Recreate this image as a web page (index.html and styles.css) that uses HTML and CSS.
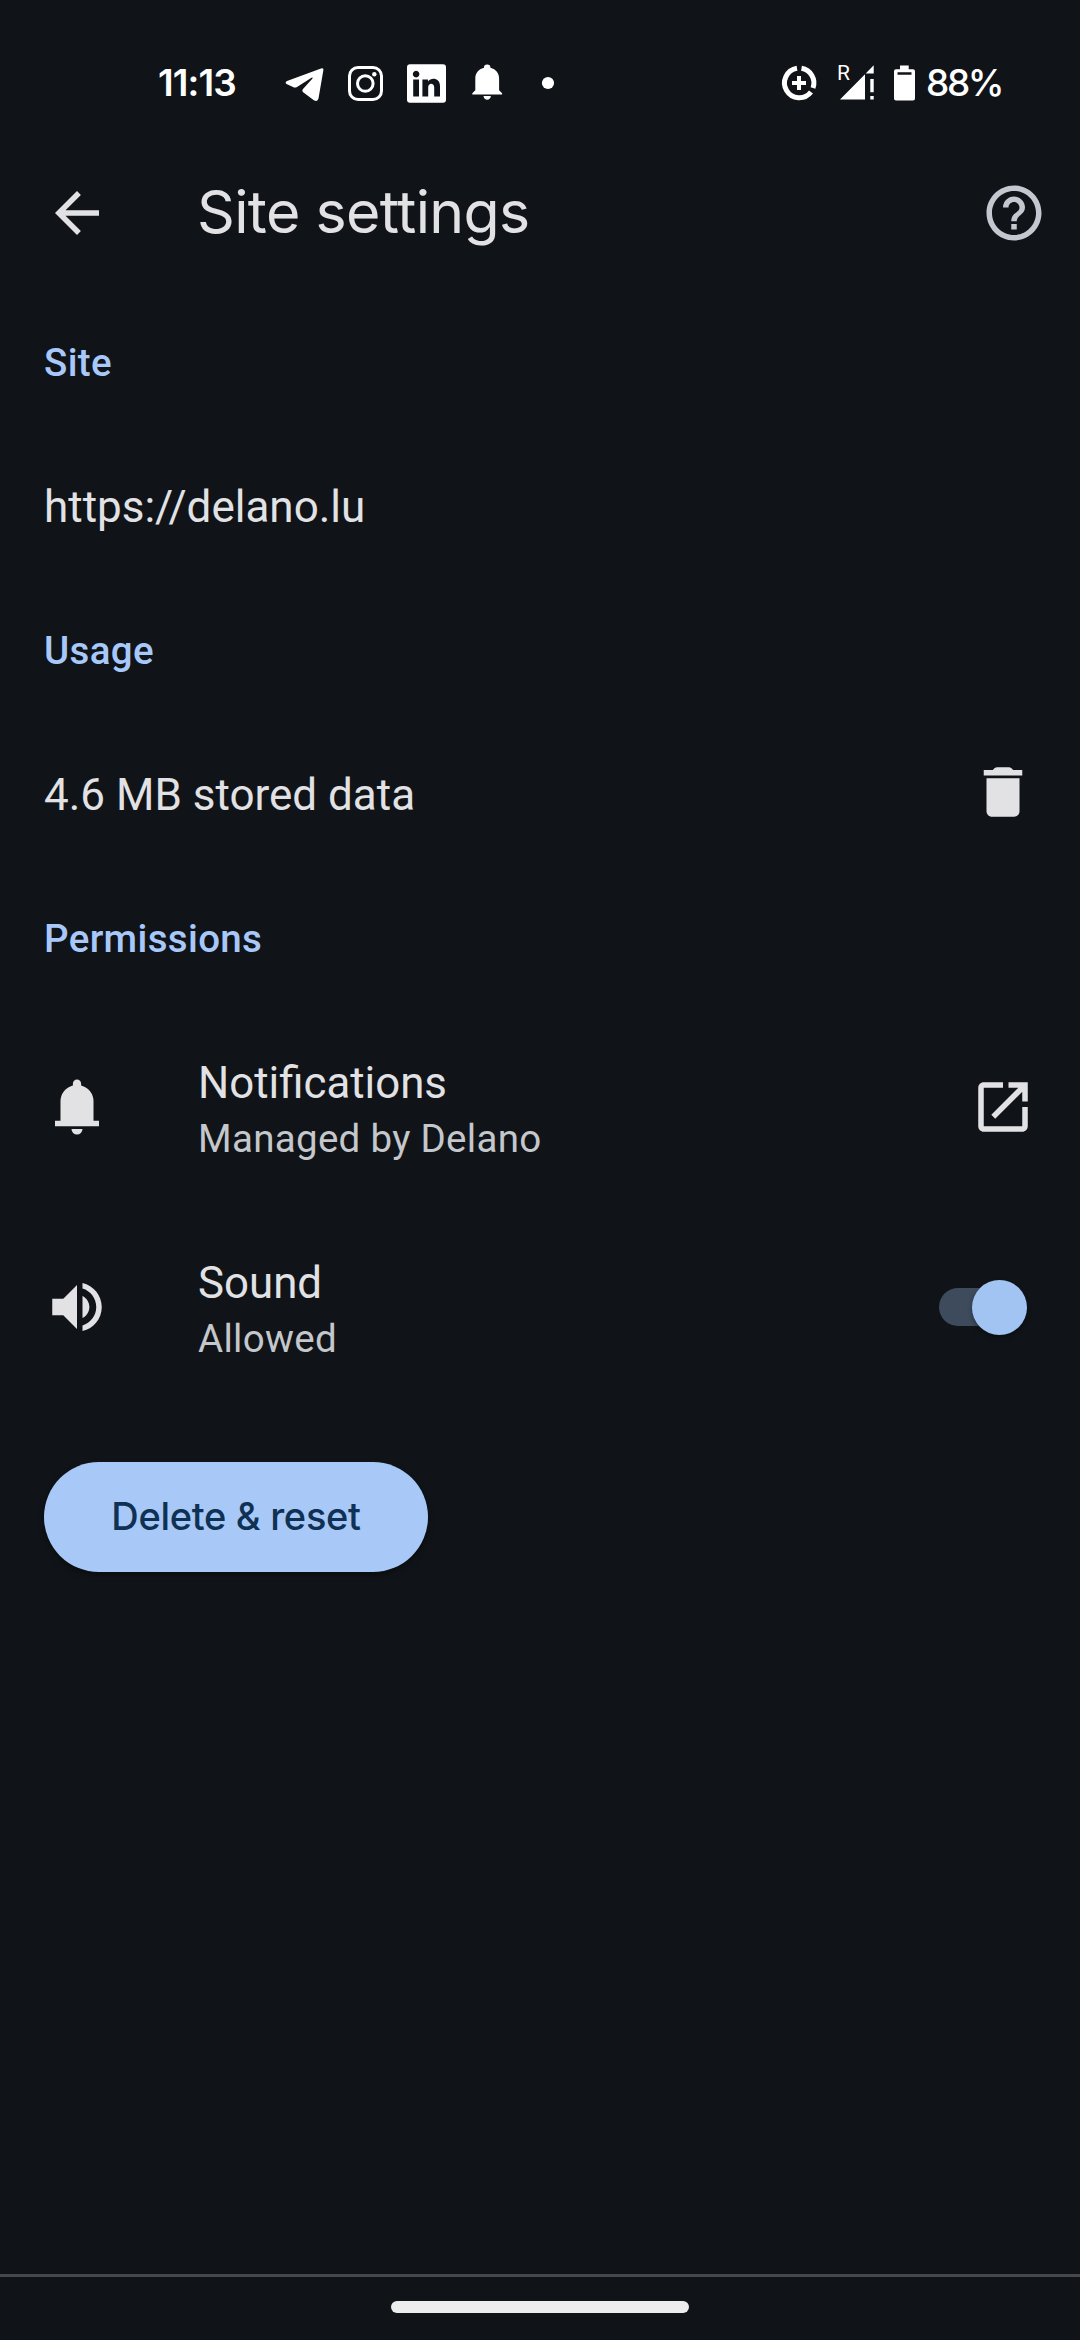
FILE: index.html
```html
<!DOCTYPE html>
<html lang="en">
<head>
<meta charset="utf-8">
<title>Site settings</title>
<link rel="stylesheet" href="styles.css">
</head>
<body>
<div class="screen">
  <div class="status">
    <span class="clock">11:13</span>
    <svg class="notices" width="280" height="50" viewBox="280 58 280 50">
      <path d="M286.500 84 Q284.500 82.500 287 81 L321 68.400 Q323.800 67.600 323.400 70 L318.500 98.500 Q317.500 102.500 313.500 100 L303.500 92.500 Q301.500 91 303 89 L312.500 78.500 Q313 77 311.500 77.800 L297 87 Q295 88 293 87 Z"/>
      <rect x="349.500" y="67.500" width="32" height="32" rx="8.500" class="line"/>
      <circle cx="365.300" cy="83.500" r="7.800" class="line"/>
      <circle cx="374.300" cy="74.300" r="2.200"/>
      <path fill-rule="evenodd" d="M410 64.300h33a3 3 0 0 1 3 3v32.400a3 3 0 0 1-3 3h-33a3 3 0 0 1-3-3V67.300a3 3 0 0 1 3-3zM413.200 79.500v17h5.800v-17zM416.100 70.800a3.300 3.300 0 1 0 .01 0zM422.400 79.500v17h5.800v-9c0-5 6-5 6 0v9h5.800v-10.500c0-8.500-9-9-12-4.500v-2z"/>
      <path d="M472.300 94.500v-1.200l3-3V78.500c0-5.500 3-9.200 8.700-10.800v-.400a3.200 2.700 0 0 1 6.400 0v.4c5.700 1.600 8.700 5.300 8.700 10.800v11.800l3 3v1.200zM483.500 96h7.400c-.5 5-6.900 5-7.400 0z"/>
      <circle cx="548" cy="83" r="6.100"/>
    </svg>
    <svg class="system" width="140" height="50" viewBox="778 58 140 50">
      <g class="ring"><path d="M797 68.300A14.800 14.800 0 1 0 811 92"/><path d="M801.500 68.300A14.800 14.800 0 0 1 813 88"/><path d="M799 76v14M792 83h14"/></g>
      <path d="M840 99.500L865 74.300v25.200zM865.700 73.500l8-8.300v8.300zM870.300 79h3.400v13.300h-3.400zM870.300 96h3.400v3.500h-3.400z"/>
      <text x="836.900" y="79.600" class="roam">R</text>
      <path fill-rule="evenodd" d="M900 65.500h8.700v3.700h4.300a2 2 0 0 1 2 2v27.300a2 2 0 0 1-2 2h-17a2 2 0 0 1-2-2V71.200a2 2 0 0 1 2-2h4zM897.500 72.200v2.600h14v-2.600z"/>
    </svg>
    <span class="charge">88%</span>
  </div>

  <header class="bar">
    <svg class="icon" viewBox="0 0 24 24"><path d="M20 11H7.830l5.590-5.590L12 4l-8 8 8 8 1.410-1.410L7.830 13H20z"/></svg>
    <h1 class="title">Site settings</h1>
    <svg class="icon help" viewBox="0 0 24 24"><path d="M11 18h2v-2h-2v2zm1-16C6.480 2 2 6.480 2 12s4.480 10 10 10 10-4.480 10-10S17.520 2 12 2zm0 18c-4.410 0-8-3.590-8-8s3.590-8 8-8 8 3.590 8 8-3.590 8-8 8zm0-14c-2.210 0-4 1.790-4 4h2c0-1.100.9-2 2-2s2 .9 2 2c0 2-3 1.750-3 5h2c0-2.250 3-2.500 3-5 0-2.210-1.790-4-4-4z"/></svg>
  </header>

  <main class="settings">
    <h2 class="heading">Site</h2>
    <div class="row"><span class="label">https://delano.lu</span></div>
    <h2 class="heading">Usage</h2>
    <div class="row">
      <span class="label">4.6 MB stored data</span>
      <svg class="icon trash" viewBox="0 0 24 24"><path d="M6 19c0 1.100.9 2 2 2h8c1.100 0 2-.9 2-2V7H6zM19 4h-3.300q-.7-1-1.400-1H9.700q-.7 0-1.400 1H5v2h14z"/></svg>
    </div>
    <h2 class="heading">Permissions</h2>
    <div class="permissions">
      <div class="row tall">
        <svg class="icon" viewBox="0 0 24 24"><path d="M4 19v-2h2v-7q0-2.075 1.250-3.688Q8.500 4.700 10.500 4.200v-.7q0-.625.438-1.062Q11.375 2 12 2t1.063.438q.437.437.437 1.062v.7q2 .5 3.250 2.112Q18 7.925 18 10v7h2v2zm8 3q-.825 0-1.412-.587Q10 20.825 10 20h4q0 .825-.587 1.413Q12.825 22 12 22z"/></svg>
        <div class="texts"><span class="label">Notifications</span><span class="detail">Managed by Delano</span></div>
        <svg class="icon" viewBox="0 0 24 24"><path d="M19 19H5V5h7V3H5c-1.110 0-2 .9-2 2v14c0 1.100.89 2 2 2h14c1.100 0 2-.9 2-2v-7h-2zM14 3v2h3.590l-9.830 9.830 1.410 1.410L19 6.410V10h2V3z"/></svg>
      </div>
      <div class="row tall">
        <svg class="icon" viewBox="0 0 24 24"><path d="M3 9v6h4l5 5V4L7 9zm13.500 3c0-1.770-1.020-3.290-2.500-4.030v8.050c1.480-.73 2.500-2.250 2.500-4.020zM14 3.230v2.060c2.890.86 5 3.540 5 6.710s-2.110 5.850-5 6.710v2.060c4.010-.91 7-4.490 7-8.770s-2.990-7.860-7-8.770z"/></svg>
        <div class="texts"><span class="label">Sound</span><span class="detail">Allowed</span></div>
        <div class="switch"><div class="thumb"></div></div>
      </div>
    </div>
    <button class="reset" type="button">Delete &amp; reset</button>
  </main>

  <footer class="nav"><div class="handle"></div></footer>
</div>
</body>
</html>
```
FILE: styles.css
```css
* { box-sizing: border-box; }
body { margin: 0; background: #101418; color: #e2e2e5; font-family: Roboto, sans-serif; }
.screen { width: 1080px; height: 2340px; display: flex; flex-direction: column; overflow: hidden; }
svg { display: block; flex: none; fill: currentColor; }

.status { height: 166px; padding: 0 0 0 158px; display: flex; align-items: center; color: #fff; }
.clock, .charge { font: 600 37px/50px Inter, sans-serif; white-space: nowrap; }
.clock { width: 122px; letter-spacing: -0.9px; }
.charge { font-weight: 500; font-size: 37px; padding-left: 8px; letter-spacing: -2.4px; }
.system { margin-left: 218px; }
.line { fill: none; stroke: currentColor; stroke-width: 3; }
.ring { fill: none; stroke: currentColor; stroke-width: 5; }
.ring path:last-child { stroke-width: 4; }
.roam { font: 400 21px Roboto, sans-serif; }

.bar { height: 94px; padding: 0 33px 0 44px; display: flex; align-items: center; }
.icon { width: 66px; height: 66px; }
.title { flex: 1; margin: 0; padding: 0 0 3px 87px; font: 400 59px/70px Inter, sans-serif; letter-spacing: -.65px; }
.help { color: #c4c7cf; }

.settings { flex: 1; padding-top: 31px; }
.heading { margin: 0; padding-left: 44px; height: 144px; font-size: 38.5px; font-weight: 500; line-height: 144px; letter-spacing: .35px; color: #a8c8fa; }
.row { height: 144px; padding: 0 44px; display: flex; align-items: center; justify-content: space-between; }
.label { font-size: 44px; line-height: 52px; }
.trash { margin-bottom: 6px; }
.permissions { margin-top: -4px; }
.tall { height: 200px; }
.texts { flex: 1; padding: 6px 0 0 88px; display: flex; flex-direction: column; gap: 5px; }
.texts .label { font-size: 43.8px; }
.detail { font-size: 38.5px; line-height: 50px; letter-spacing: .3px; color: #c4c7cb; }
.switch { width: 83px; height: 38px; margin-right: 14px; border-radius: 19px; background: #3d4b5d; display: flex; justify-content: flex-end; align-items: center; }
.thumb { flex: none; width: 55px; height: 55px; margin-right: -5px; border-radius: 50%; background: #a2c4f3; box-shadow: 0 3px 5px rgba(0, 0, 0, .3); }
.reset { display: block; width: 384px; height: 110px; margin: 55px 0 0 44px; padding: 0 0 2px; border: 0; border-radius: 55px; background: #a8c8f8; color: #0f3153; font: 500 38px/46px Inter, sans-serif; letter-spacing: -.3px; box-shadow: 0 3px 6px rgba(0, 0, 0, .4); }

.nav { height: 66px; border-top: 3px solid #46484c; padding-top: 24px; }
.handle { width: 298px; height: 12px; margin: 0 auto; border-radius: 6px; background: #eceeed; }
```
